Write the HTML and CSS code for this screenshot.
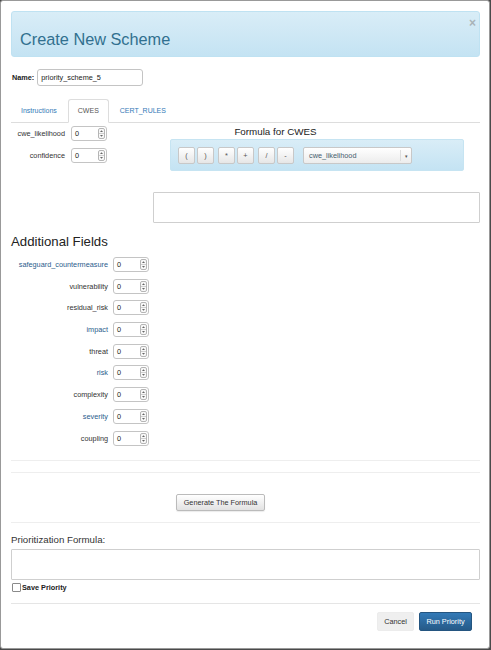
FILE: index.html
```
<!DOCTYPE html>
<html>
<head>
<meta charset="utf-8">
<link rel="stylesheet" href="styles.css">
</head>
<body>
<div class="modal">
  <div class="modal-header">
    <h3 class="modal-title">Create New Scheme</h3>
    <span class="close">&times;</span>
  </div>

  <div class="name-row">
    <label class="name-label">Name:</label>
    <span class="text-input">priority_scheme_5</span>
  </div>

  <ul class="tabs">
    <li class="tab"><a>Instructions</a></li>
    <li class="tab active"><a>CWES</a></li>
    <li class="tab"><a>CERT_RULES</a></li>
  </ul>

  <div class="pane">
    <div class="pane-fields">
      <div class="field-row">
        <span class="field-label">cwe_likelihood</span>
        <span class="num"><span class="num-val">0</span><svg class="spin" width="7" height="11" viewBox="0 0 7 11"><rect x="0.5" y="0.5" width="6" height="10" rx="1.5" fill="#f8f8f8" stroke="#b5b5b5"/><line x1="1" y1="5.5" x2="6" y2="5.5" stroke="#cfcfcf"/><path d="M2 4 L3.5 2.3 L5 4Z" fill="#666"/><path d="M2 7 L3.5 8.7 L5 7Z" fill="#666"/></svg></span>
      </div>
      <div class="field-row">
        <span class="field-label">confidence</span>
        <span class="num"><span class="num-val">0</span><svg class="spin" width="7" height="11" viewBox="0 0 7 11"><rect x="0.5" y="0.5" width="6" height="10" rx="1.5" fill="#f8f8f8" stroke="#b5b5b5"/><line x1="1" y1="5.5" x2="6" y2="5.5" stroke="#cfcfcf"/><path d="M2 4 L3.5 2.3 L5 4Z" fill="#666"/><path d="M2 7 L3.5 8.7 L5 7Z" fill="#666"/></svg></span>
      </div>
    </div>
    <div class="pane-formula">
      <h4 class="formula-title">Formula for CWES</h4>
      <div class="formula-bar">
        <div class="btn-group">
          <span class="op-btn">(</span><span class="op-btn">)</span>
        </div>
        <div class="btn-group">
          <span class="op-btn">*</span><span class="op-btn">+</span>
        </div>
        <div class="btn-group">
          <span class="op-btn">/</span><span class="op-btn">-</span>
        </div>
        <div class="select">
          <span class="select-text">cwe_likelihood</span>
          <span class="select-caret">&#9662;</span>
        </div>
      </div>
      <div class="formula-area"></div>
    </div>
  </div>

  <h3 class="section-title">Additional Fields</h3>

  <div class="extra-fields">
    <span class="field-label link">safeguard_countermeasure</span>
    <span class="num"><span class="num-val">0</span><svg class="spin" width="7" height="11" viewBox="0 0 7 11"><rect x="0.5" y="0.5" width="6" height="10" rx="1.5" fill="#f8f8f8" stroke="#b5b5b5"/><line x1="1" y1="5.5" x2="6" y2="5.5" stroke="#cfcfcf"/><path d="M2 4 L3.5 2.3 L5 4Z" fill="#666"/><path d="M2 7 L3.5 8.7 L5 7Z" fill="#666"/></svg></span>
    <span class="field-label">vulnerability</span>
    <span class="num"><span class="num-val">0</span><svg class="spin" width="7" height="11" viewBox="0 0 7 11"><rect x="0.5" y="0.5" width="6" height="10" rx="1.5" fill="#f8f8f8" stroke="#b5b5b5"/><line x1="1" y1="5.5" x2="6" y2="5.5" stroke="#cfcfcf"/><path d="M2 4 L3.5 2.3 L5 4Z" fill="#666"/><path d="M2 7 L3.5 8.7 L5 7Z" fill="#666"/></svg></span>
    <span class="field-label">residual_risk</span>
    <span class="num"><span class="num-val">0</span><svg class="spin" width="7" height="11" viewBox="0 0 7 11"><rect x="0.5" y="0.5" width="6" height="10" rx="1.5" fill="#f8f8f8" stroke="#b5b5b5"/><line x1="1" y1="5.5" x2="6" y2="5.5" stroke="#cfcfcf"/><path d="M2 4 L3.5 2.3 L5 4Z" fill="#666"/><path d="M2 7 L3.5 8.7 L5 7Z" fill="#666"/></svg></span>
    <span class="field-label link">impact</span>
    <span class="num"><span class="num-val">0</span><svg class="spin" width="7" height="11" viewBox="0 0 7 11"><rect x="0.5" y="0.5" width="6" height="10" rx="1.5" fill="#f8f8f8" stroke="#b5b5b5"/><line x1="1" y1="5.5" x2="6" y2="5.5" stroke="#cfcfcf"/><path d="M2 4 L3.5 2.3 L5 4Z" fill="#666"/><path d="M2 7 L3.5 8.7 L5 7Z" fill="#666"/></svg></span>
    <span class="field-label">threat</span>
    <span class="num"><span class="num-val">0</span><svg class="spin" width="7" height="11" viewBox="0 0 7 11"><rect x="0.5" y="0.5" width="6" height="10" rx="1.5" fill="#f8f8f8" stroke="#b5b5b5"/><line x1="1" y1="5.5" x2="6" y2="5.5" stroke="#cfcfcf"/><path d="M2 4 L3.5 2.3 L5 4Z" fill="#666"/><path d="M2 7 L3.5 8.7 L5 7Z" fill="#666"/></svg></span>
    <span class="field-label link">risk</span>
    <span class="num"><span class="num-val">0</span><svg class="spin" width="7" height="11" viewBox="0 0 7 11"><rect x="0.5" y="0.5" width="6" height="10" rx="1.5" fill="#f8f8f8" stroke="#b5b5b5"/><line x1="1" y1="5.5" x2="6" y2="5.5" stroke="#cfcfcf"/><path d="M2 4 L3.5 2.3 L5 4Z" fill="#666"/><path d="M2 7 L3.5 8.7 L5 7Z" fill="#666"/></svg></span>
    <span class="field-label">complexity</span>
    <span class="num"><span class="num-val">0</span><svg class="spin" width="7" height="11" viewBox="0 0 7 11"><rect x="0.5" y="0.5" width="6" height="10" rx="1.5" fill="#f8f8f8" stroke="#b5b5b5"/><line x1="1" y1="5.5" x2="6" y2="5.5" stroke="#cfcfcf"/><path d="M2 4 L3.5 2.3 L5 4Z" fill="#666"/><path d="M2 7 L3.5 8.7 L5 7Z" fill="#666"/></svg></span>
    <span class="field-label link">severity</span>
    <span class="num"><span class="num-val">0</span><svg class="spin" width="7" height="11" viewBox="0 0 7 11"><rect x="0.5" y="0.5" width="6" height="10" rx="1.5" fill="#f8f8f8" stroke="#b5b5b5"/><line x1="1" y1="5.5" x2="6" y2="5.5" stroke="#cfcfcf"/><path d="M2 4 L3.5 2.3 L5 4Z" fill="#666"/><path d="M2 7 L3.5 8.7 L5 7Z" fill="#666"/></svg></span>
    <span class="field-label">coupling</span>
    <span class="num"><span class="num-val">0</span><svg class="spin" width="7" height="11" viewBox="0 0 7 11"><rect x="0.5" y="0.5" width="6" height="10" rx="1.5" fill="#f8f8f8" stroke="#b5b5b5"/><line x1="1" y1="5.5" x2="6" y2="5.5" stroke="#cfcfcf"/><path d="M2 4 L3.5 2.3 L5 4Z" fill="#666"/><path d="M2 7 L3.5 8.7 L5 7Z" fill="#666"/></svg></span>
  </div>

  <hr class="rule rule-1">
  <hr class="rule rule-2">

  <div class="generate-row">
    <span class="btn btn-default">Generate The Formula</span>
  </div>

  <hr class="rule rule-3">

  <div class="prio-label">Prioritization Formula:</div>
  <div class="prio-area"></div>
  <label class="save-row"><input type="checkbox" class="check"><span>Save Priority</span></label>

  <div class="modal-footer">
    <span class="btn btn-cancel">Cancel</span>
    <span class="btn btn-primary">Run Priority</span>
  </div>
</div>
</body>
</html>
```

FILE: styles.css
```
* {
  box-sizing: border-box;
}

html, body {
  margin: 0;
  padding: 0;
}

body {
  background: #4a4a4a;
  font-family: "Liberation Sans", Arial, sans-serif;
  font-size: 7.3px;
  color: #333;
  width: 491px;
  height: 650px;
  overflow: hidden;
}

.modal {
  width: 490px;
  height: 649px;
  background: #fff;
  border: 1px solid #999;
  border-radius: 3px;
  padding: 10px 9px 0 10px;
}

.modal-header {
  position: relative;
  height: 46px;
  border: 1px solid #bfe2f2;
  border-radius: 3px;
  background: linear-gradient(to bottom, #d9edf7 0%, #c4e3f3 100%);
  padding: 19px 8px 0;
}

.modal-title {
  margin: 0;
  font-size: 16.3px;
  font-weight: normal;
  line-height: 1;
  color: #31708f;
}

.close {
  position: absolute;
  right: 3px;
  top: 5px;
  font-size: 12px;
  font-weight: bold;
  line-height: 1;
  color: #a9b3b8;
}

.name-row {
  margin-top: 12px;
  display: flex;
  align-items: center;
  height: 17px;
}

.name-label {
  font-weight: bold;
  margin-left: 1px;
  margin-right: 3px;
  color: #222;
}

.text-input {
  display: flex;
  align-items: center;
  width: 106px;
  height: 17px;
  border: 1px solid #c4c4c4;
  border-radius: 3px;
  padding-left: 3px;
  color: #222;
}

.tabs {
  list-style: none;
  margin: 13px 0 0;
  padding: 0;
  display: flex;
  border-bottom: 1px solid #ddd;
  height: 24px;
  font-size: 7px;
}

.tab {
  margin-bottom: -1px;
  margin-right: 1px;
}

.tab a {
  display: block;
  height: 24px;
  line-height: 22px;
  padding: 0 9px;
  border: 1px solid transparent;
  border-radius: 3px 3px 0 0;
  color: #337ab7;
}

.tab.active a {
  color: #555;
  background: #fff;
  border-color: #ddd #ddd transparent;
}

.pane {
  display: grid;
  grid-template-columns: 142px 1fr;
}

.pane-fields {
  padding-top: 3px;
  display: flex;
  flex-direction: column;
  gap: 7px;
}

.field-row {
  display: grid;
  grid-template-columns: 54px 36px;
  column-gap: 6px;
  align-items: center;
}

.field-label {
  text-align: right;
  white-space: nowrap;
  color: #333;
}

.field-label.link {
  color: #2a5d8c;
}

.num {
  display: flex;
  align-items: center;
  justify-content: space-between;
  width: 36px;
  height: 15px;
  border: 1px solid #c4c4c4;
  border-radius: 3px;
  padding: 0 1px 0 3px;
  background: #fff;
}

.num-val {
  color: #222;
}

.spin {
  display: block;
}

.pane-formula {
  padding-top: 3px;
}

.formula-title {
  margin: 0;
  font-size: 9.8px;
  font-weight: normal;
  line-height: 12px;
  text-align: center;
  padding-right: 82px;
  color: #222;
}

.formula-bar {
  margin: 1px 0 0 17px;
  width: 294px;
  height: 32px;
  border: 1px solid #c6e4f2;
  border-radius: 2px;
  background: linear-gradient(to bottom, #d9edf7 0%, #c4e3f3 100%);
  display: flex;
  align-items: flex-start;
  padding: 7px 0 0 7px;
  gap: 4px;
}

.btn-group {
  display: flex;
  gap: 2px;
}

.op-btn {
  display: flex;
  align-items: center;
  justify-content: center;
  width: 17px;
  height: 17px;
  border: 1px solid #c8c8c8;
  border-radius: 2px;
  background: linear-gradient(to bottom, #fff 0%, #e6e6e6 100%);
  color: #555;
  font-size: 7.3px;
}

.select {
  margin-left: 5px;
  width: 109px;
  height: 17px;
  border: 1px solid #c8c8c8;
  border-radius: 2px;
  background: linear-gradient(to bottom, #fff 0%, #ececec 100%);
  display: flex;
  align-items: center;
  justify-content: space-between;
  padding-left: 5px;
}

.select-text {
  color: #46606e;
}

.select-caret {
  height: 11px;
  border-left: 1px solid #ddd;
  width: 11px;
  display: flex;
  align-items: center;
  justify-content: center;
  font-size: 5px;
  color: #555;
}

.formula-area {
  margin: 21px 0 0 0;
  height: 31px;
  border: 1px solid #cfcfcf;
  border-radius: 1px;
}

.section-title {
  margin: 11px 0 0;
  font-size: 13.2px;
  font-weight: normal;
  line-height: 16px;
  color: #222;
}

.extra-fields {
  margin-top: 7px;
  display: grid;
  grid-template-columns: 97px 36px;
  column-gap: 5px;
  row-gap: 6.7px;
  align-items: center;
  grid-auto-rows: 15px;
}

.rule {
  margin: 0;
  border: 0;
  border-top: 1px solid #eee;
  height: 0;
}

.rule-1 {
  margin-top: 14px;
}

.rule-2 {
  margin-top: 11px;
}

.generate-row {
  margin-top: 21px;
  padding-left: 165px;
  display: flex;
}

.btn {
  display: flex;
  align-items: center;
  justify-content: center;
  height: 17px;
  border: 1px solid #bbb;
  border-radius: 2px;
  white-space: nowrap;
}

.btn-default {
  width: 89px;
  background: linear-gradient(to bottom, #fff 0%, #e2e2e2 100%);
  color: #333;
  box-shadow: 0 1px 1px rgba(0, 0, 0, 0.08);
}

.rule-3 {
  margin-top: 11px;
}

.prio-label {
  margin-top: 11px;
  font-size: 9.7px;
  line-height: 12px;
  color: #333;
}

.prio-area {
  margin-top: 3px;
  height: 31px;
  border: 1px solid #cfcfcf;
  border-radius: 1px;
}

.save-row {
  margin-top: 3px;
  display: flex;
  align-items: center;
  height: 10px;
  font-weight: bold;
  color: #222;
}

.check {
  -webkit-appearance: none;
  appearance: none;
  width: 9px;
  height: 9px;
  margin: 0 1px 0 1px;
  border: 1px solid #8a8a8a;
  border-radius: 1px;
  background: #fff;
}

.modal-footer {
  margin-top: 10px;
  border-top: 1px solid #e5e5e5;
  padding: 8px 8px 0 0;
  display: flex;
  justify-content: flex-end;
  gap: 5px;
}

.modal-footer .btn {
  height: 19px;
}

.btn-cancel {
  width: 37px;
  background: #efefef;
  border-color: #ececec;
  color: #333;
}

.btn-primary {
  width: 53px;
  background: linear-gradient(to bottom, #337ab7 0%, #265a88 100%);
  border-color: #245580;
  color: #fff;
}
```
